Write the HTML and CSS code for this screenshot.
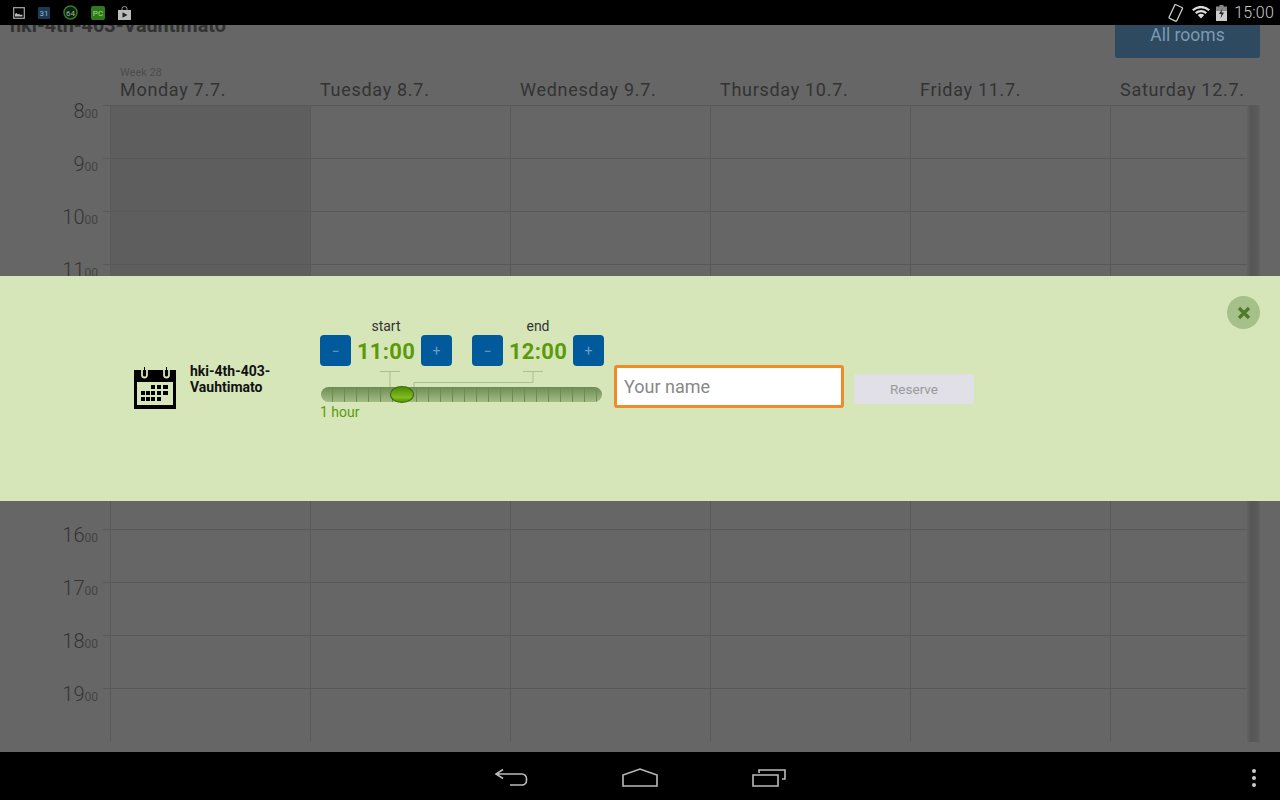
FILE: index.html
```html
<!DOCTYPE html>
<html>
<head>
  <meta charset="utf-8">
  <title>Room reservation</title>
  <link rel="stylesheet" href="styles.css">
</head>
<body>
  <div class="screen">
    <div class="status-bar">
      <div class="status-left">
        <svg class="note-icon" width="12" height="12" viewBox="0 0 12 12"><rect x="0.7" y="0.7" width="10.6" height="10.6" fill="none" stroke="#aaa" stroke-width="1.2"/><path d="M2 9.500V7l1.500-1 1.500 1.500 1-.7 1 .9h2.500v1.800z" fill="#bbb"/></svg>
        <svg class="note-icon" width="12" height="12" viewBox="0 0 12 12"><rect width="12" height="12" rx="1" fill="#1d3a55"/><text x="6" y="9" class="mini-text" fill="#8fb4d8">31</text></svg>
        <svg class="note-icon" width="15" height="15" viewBox="0 0 15 15"><circle cx="7.500" cy="7.500" r="6.500" fill="#10200f" stroke="#2f7a2a" stroke-width="1.500"/><text x="7.500" y="10.500" class="mini-text" fill="#9ab89a">64</text></svg>
        <svg class="note-icon" width="14" height="14" viewBox="0 0 14 14"><rect width="14" height="14" rx="2" fill="#2f7a1c"/><text x="7" y="10" class="mini-text" fill="#a6d68a">PC</text></svg>
        <svg class="note-icon" width="13" height="14" viewBox="0 0 13 14"><path d="M4 4V2.500a2.500 2 0 0 1 5 0V4" fill="none" stroke="#999"/><rect y="4" width="13" height="10" fill="#bbb"/><path d="M4.500 6.200v5.600l5-2.800z" fill="#222"/></svg>
      </div>
      <div class="status-right">
        <svg width="16" height="18" viewBox="0 0 16 18"><rect x="3.500" y="1.500" width="8.500" height="15" rx="1" transform="rotate(25 8 9)" fill="none" stroke="#ccc" stroke-width="1.300"/></svg>
        <svg class="wifi-icon" width="18" height="13" viewBox="0 0 18 13"><path d="M0 3.500a13 13 0 0 1 18 0l-1.500 1.600a11 11 0 0 0-15 0z" fill="#ddd"/><path d="M3 6.300a9 9 0 0 1 12 0l-1.500 1.600a7 7 0 0 0-9 0z" fill="#ddd"/><path d="M5.800 9a5 5 0 0 1 6.400 0L9 12.500z" fill="#ddd"/></svg>
        <svg width="11" height="16" viewBox="0 0 11 16"><rect x="3.500" width="4" height="2" fill="#888"/><rect y="1.500" width="11" height="5" fill="#888"/><rect y="6" width="11" height="10" fill="#ccc"/><path d="M6.500 3.500L3 9h2.500l-1 4.500L8 7.500H5.500z" fill="#222"/></svg>
        <span class="clock">15:00</span>
      </div>
    </div>

    <div class="main">
      <div class="top-bar">
        <div class="room-title">hki-4th-403-Vauhtimato</div>
        <div class="all-rooms">All rooms</div>
      </div>

      <div class="day-header">
        <div class="day"><span class="week">Week 28</span>Monday 7.7.</div>
        <div class="day">Tuesday 8.7.</div>
        <div class="day">Wednesday 9.7.</div>
        <div class="day">Thursday 10.7.</div>
        <div class="day">Friday 11.7.</div>
        <div class="day">Saturday 12.7.</div>
      </div>

      <div class="grid" id="grid"></div>
      <div class="scroll-thumb"></div>

      <div class="panel">
        <button class="close-btn">
          <svg width="14" height="14" viewBox="0 0 14 14"><path d="M2 2l10 10M12 2L2 12" stroke="#4f7a2c" stroke-width="3.200"/></svg>
        </button>
        <svg class="cal-icon" width="42" height="42" viewBox="0 0 42 42">
          <rect y="3" width="42" height="39" fill="#000"/>
          <rect x="3" y="15" width="36" height="23" fill="#d6e6b9"/>
          <path d="M8 2v6a2.500 2.500 0 0 0 5 0V2M30 2v6a2.500 2.500 0 0 0 5 0V2" fill="none" stroke="#d6e6b9" stroke-width="1.800"/>
          <path d="M10 0h1v6h-1zM32 0h1v6h-1z" fill="#000"/>
          <path d="M17 18h4v4h-4zM23 18h4v4h-4zM29 18h5v4h-5zM7 24h4v4H7zM12 24h4v4h-4zM17 24h4v4h-4zM23 24h4v4h-4zM29 24h5v4h-5zM7 30h4v4H7zM12 30h4v4h-4zM17 30h4v4h-4zM23 30h4v4h-4z" fill="#000"/>
        </svg>
        <div class="panel-room">hki-4th-403-<br>Vauhtimato</div>

        <div class="picker">
          <div class="times">
            <div class="time-group">
              <div class="time-label">start</div>
              <div class="time-row">
                <button class="step">&minus;</button>
                <span class="time">11:00</span>
                <button class="step">+</button>
              </div>
            </div>
            <div class="time-group">
              <div class="time-label">end</div>
              <div class="time-row">
                <button class="step">&minus;</button>
                <span class="time">12:00</span>
                <button class="step">+</button>
              </div>
            </div>
          </div>
          <div class="slider-wrap">
            <svg class="connectors" width="284" height="17" viewBox="0 0 284 17">
              <path d="M59 .5h20M69 .5V16M202 .5h20M212 .5V11.500H93V16" fill="none" stroke="#a9bf94"/>
            </svg>
            <div class="slider"><div class="handle"></div></div>
          </div>
          <div class="duration">1 hour</div>
        </div>

        <input class="name-input" type="text" placeholder="Your name">
        <button class="reserve">Reserve</button>
      </div>
    </div>

    <div class="nav-bar">
      <div class="nav-buttons">
        <svg width="34" height="20" viewBox="0 0 34 20"><path d="M9 1.500L2 6l7 4.500M2 6h26a4.500 4.500 0 0 1 4.500 4.500v2a4.500 4.500 0 0 1-4.500 4.500H16" fill="none" stroke="#bbb" stroke-width="1.600"/></svg>
        <svg width="36" height="20" viewBox="0 0 36 20"><path d="M1 18V7L18 1l17 6v11z" fill="none" stroke="#bbb" stroke-width="1.600"/></svg>
        <svg width="34" height="20" viewBox="0 0 34 20"><path d="M1 7h25v11H1zM7 5V2h26v9h-3" fill="none" stroke="#bbb" stroke-width="1.600"/></svg>
      </div>
      <div class="menu-dots"><i></i><i></i><i></i></div>
    </div>
  </div>

  <script>
    // hour rows of the calendar, 8 to 19
    var grid = document.getElementById('grid');
    for (var h = 8; h <= 19; h++) {
      var row = '<div class="hour"><span class="hour-label">' + h + '<small>00</small></span></div>';
      for (var d = 0; d < 6; d++) {
        row += '<div class="cell' + (d == 0 ? ' today' : '') + '"></div>';
      }
      grid.insertAdjacentHTML('beforeend', '<div class="row">' + row + '</div>');
    }
  </script>
</body>
</html>
```

FILE: styles.css
```css
* {
  box-sizing: border-box;
}
body {
  margin: 0;
  font-family: Roboto, sans-serif;
  background: #666;
  overflow: hidden;
}
button {
  font-family: inherit;
  padding: 0;
  border: none;
}
.screen {
  display: flex;
  flex-direction: column;
  width: 1280px;
  height: 800px;
}

/* status bar */
.status-bar {
  height: 25px;
  flex: none;
  background: #000;
  display: flex;
  justify-content: space-between;
  align-items: center;
  padding: 0 6px 0 13px;
  position: relative;
  z-index: 2;
}
.status-left {
  display: flex;
  align-items: center;
  gap: 13px;
}
.note-icon {
  display: block;
}
.mini-text {
  font-size: 8px;
  text-anchor: middle;
}
.status-right {
  display: flex;
  align-items: center;
  gap: 6px;
}
.wifi-icon {
  margin-left: 2px;
}
.clock {
  color: #ccc;
  font-size: 16px;
  font-weight: 300;
  letter-spacing: 0.2px;
  margin-left: 1px;
}

/* calendar behind the panel */
.main {
  flex: 1;
  position: relative;
  overflow: hidden;
  background: #666;
}
.top-bar {
  display: flex;
  justify-content: space-between;
  padding: 0 20px 0 10px;
  margin-top: -12px;
  height: 45px;
}
.room-title {
  font-size: 19.8px;
  font-weight: 700;
  color: #333;
  line-height: 22px;
  padding-top: 2px;
}
.all-rooms {
  width: 145px;
  height: 45px;
  background: #2e4a60;
  border-radius: 3px;
  color: #7d9ab0;
  font-size: 17.5px;
  text-align: center;
  line-height: 45px;
}
.day-header {
  display: flex;
  padding-left: 110px;
  height: 47px;
}
.day {
  width: 200px;
  flex: none;
  padding-left: 10px;
  padding-top: 22px;
  color: #333;
  font-size: 18px;
  letter-spacing: 0.7px;
  line-height: 20px;
  position: relative;
  white-space: nowrap;
}
.week {
  position: absolute;
  left: 10px;
  top: 8px;
  font-size: 11px;
  letter-spacing: 0;
  line-height: 13px;
  color: #4d4d4d;
}
.grid {
  width: 1260px;
}
.row {
  display: flex;
  height: 53px;
}
.hour {
  width: 110px;
  position: relative;
  padding-right: 12px;
  text-align: right;
  color: #333;
  font-size: 20px;
  font-weight: 300;
  line-height: 24px;
}
.hour::after {
  content: "";
  position: absolute;
  left: 103px;
  right: 0;
  top: 0;
  border-top: 1px solid #585858;
}
.hour small {
  font-size: 12px;
  font-weight: 400;
  color: #444;
}
.hour-label {
  position: relative;
  top: -6px;
}
.cell {
  width: 200px;
  flex: none;
  border-top: 1px solid #585858;
  border-left: 1px solid #5a5a5a;
}
.cell:last-child {
  width: 150px;
}
.today {
  background: #5e5e5e;
}
.row:nth-child(n+8) .today {
  background: none;
}
.scroll-thumb {
  position: absolute;
  left: 1247px;
  top: 80px;
  width: 13px;
  height: 637px;
  background: linear-gradient(to right, #626262, #565656 30%, #5a5a5a 80%, #626262);
}

/* reservation panel */
.panel {
  position: absolute;
  left: 0;
  right: 0;
  top: 251px;
  height: 225px;
  background: #d6e6b9;
  display: flex;
  align-items: flex-start;
  padding: 42px 0 0 134px;
}
.close-btn {
  position: absolute;
  left: 1227px;
  top: 20px;
  width: 33px;
  height: 33px;
  border-radius: 50%;
  background: #a5c088;
  display: flex;
  align-items: center;
  justify-content: center;
}
.cal-icon {
  margin-top: 49px;
  flex: none;
}
.panel-room {
  width: 130px;
  margin: 45px 0 0 14px;
  font-size: 14px;
  font-weight: 700;
  line-height: 16px;
  color: #111;
  flex: none;
}
.picker {
  width: 284px;
  flex: none;
}
.times {
  display: flex;
  gap: 20px;
}
.time-label {
  font-size: 14px;
  color: #333;
  text-align: center;
  line-height: 17px;
}
.time-row {
  display: flex;
  align-items: center;
  justify-content: space-between;
  width: 132px;
}
.step {
  width: 31px;
  height: 31px;
  border-radius: 4px;
  background: #005a9c;
  color: #6f9cc0;
  font-size: 14px;
  line-height: 30px;
  text-align: center;
}
.time {
  font-size: 22px;
  font-weight: 700;
  color: #5b9a0a;
  letter-spacing: 0.3px;
  padding-top: 2px;
}
.slider-wrap {
  position: relative;
  padding-top: 21px;
  margin-left: 1px;
}
.connectors {
  position: absolute;
  left: 0;
  top: 5px;
}
.slider {
  position: relative;
  width: 281px;
  height: 15px;
  border-radius: 8px;
  background:
    repeating-linear-gradient(to right, transparent 0 11px, #6f8c58 11px 12px),
    linear-gradient(to bottom, #6f8c55, #a3bd87);
}
.handle {
  position: absolute;
  left: 69px;
  top: -1px;
  width: 24px;
  height: 17px;
  border-radius: 50%;
  background: linear-gradient(to bottom, #4a8a06, #82bd1c 70%, #558f0c);
  border: 1px solid #3a6a08;
}
.duration {
  font-size: 14px;
  color: #5b9a0a;
  line-height: 16px;
  margin-top: 2px;
}
.name-input {
  width: 230px;
  height: 43px;
  margin: 47px 0 0 10px;
  border: 3px solid #f08c28;
  border-radius: 3px;
  background: #fff;
  padding: 0 7px;
  font-family: inherit;
  font-size: 18px;
  outline: none;
  flex: none;
}
.name-input::placeholder {
  color: #888;
}
.reserve {
  width: 120px;
  height: 30px;
  margin: 56px 0 0 10px;
  background: #e0e0e6;
  border-radius: 3px;
  color: #999;
  font-size: 13.5px;
  flex: none;
}

/* nav bar */
.nav-bar {
  height: 48px;
  flex: none;
  background: #000;
  position: relative;
  z-index: 2;
}
.nav-buttons {
  display: flex;
  justify-content: center;
  align-items: center;
  gap: 94px;
  height: 100%;
  padding-top: 3px;
}
.menu-dots {
  position: absolute;
  left: 1252px;
  top: 17px;
  display: flex;
  flex-direction: column;
  gap: 3px;
}
.menu-dots i {
  display: block;
  width: 4px;
  height: 4px;
  border-radius: 50%;
  background: #ccc;
}
```
